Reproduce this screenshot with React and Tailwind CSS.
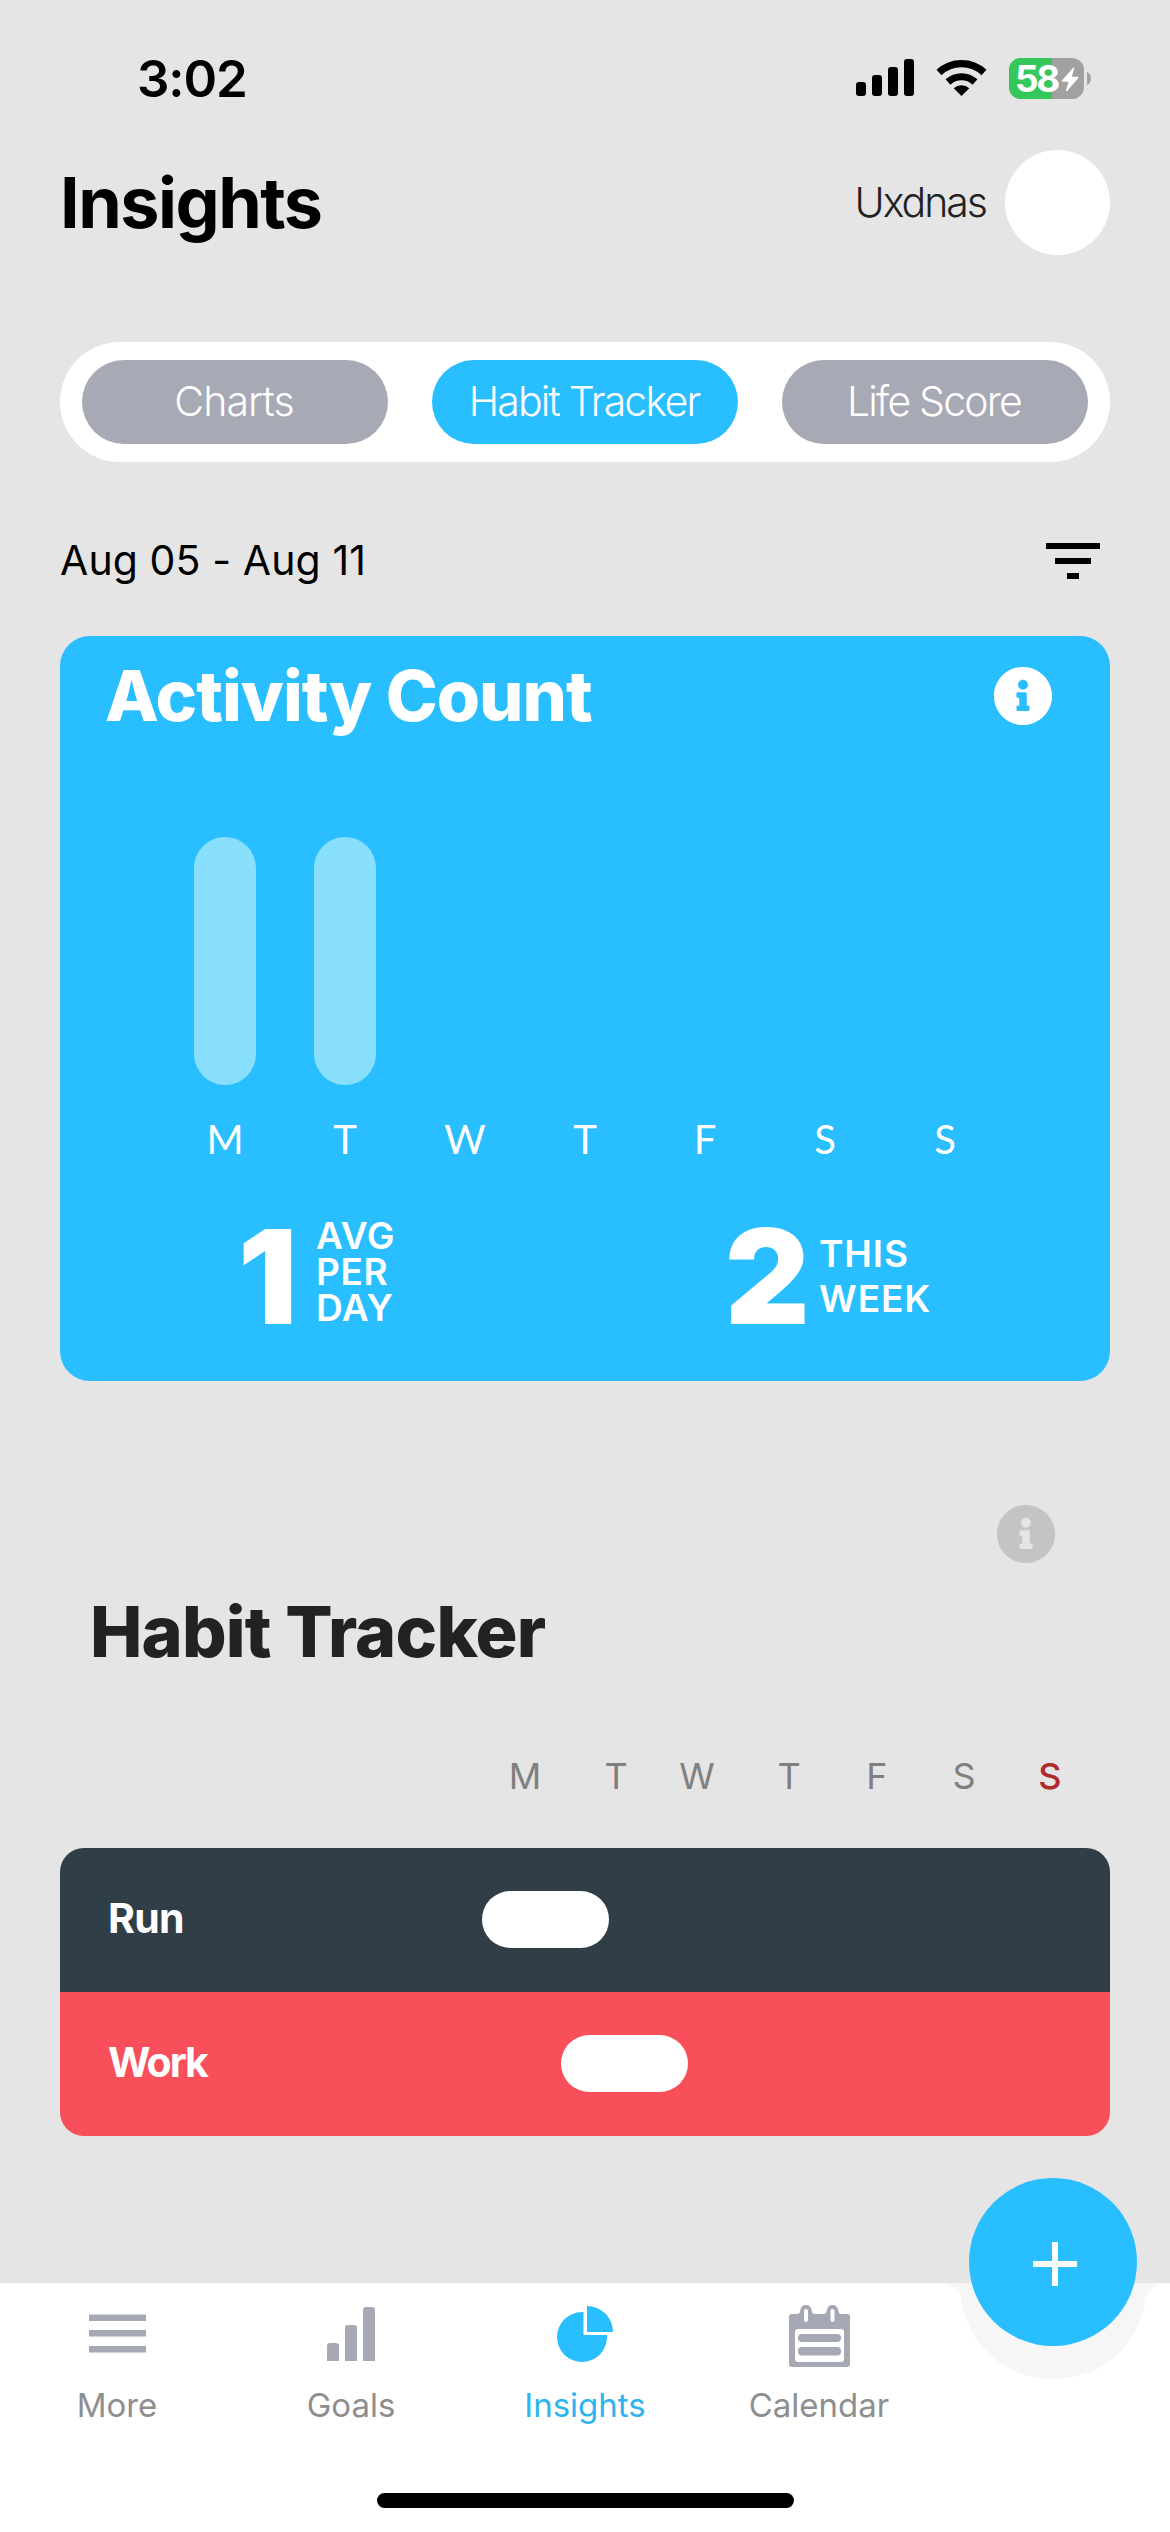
import React, { useState } from 'react';
import { FaInfoCircle } from 'react-icons/fa';

// ============================================================================
// DATA
// ============================================================================

const TABS = [
  { name: 'Charts', textClass: 'tracking-[-0.9px]' },
  { name: 'Habit Tracker', textClass: 'tracking-[-1.8px]' },
  { name: 'Life Score', textClass: 'tracking-[-1.8px]' },
];

const ACTIVITY = [
  { day: 'M', count: 1 },
  { day: 'T', count: 1 },
  { day: 'W', count: 0 },
  { day: 'T', count: 0 },
  { day: 'F', count: 0 },
  { day: 'S', count: 0 },
  { day: 'S', count: 0 },
];

const WEEK_DAYS = [
  { day: 'M', className: 'text-[#808080]' },
  { day: 'T', className: 'ml-[31px] text-[#808080]' },
  { day: 'W', className: 'ml-[21px] text-[#808080]' },
  { day: 'T', className: 'ml-[32px] text-[#808080]' },
  { day: 'F', className: 'ml-[28px] text-[#808080]' },
  { day: 'S', className: 'ml-[27px] text-[#808080]' },
  { day: 'S', className: 'ml-[26px] text-[#b02a2c] font-medium' },
];

const HABITS = [
  { name: 'Run', rowClass: 'bg-[#303e47]', pillClass: 'ml-[422px]', textClass: 'tracking-[-0.7px]' },
  { name: 'Work', rowClass: 'bg-[#f84f5a]', pillClass: 'ml-[501px]', textClass: 'tracking-[-2px]' },
];

// ============================================================================
// ICONS
// ============================================================================

const SignalIcon = () => (
  <svg width="58" height="38" viewBox="0 0 58 38" fill="black">
    <rect x="0" y="23" width="10" height="14" rx="3" />
    <rect x="16" y="16" width="10" height="21" rx="3" />
    <rect x="32" y="8" width="10" height="29" rx="3" />
    <rect x="48" y="0" width="10" height="37" rx="3" />
  </svg>
);

const WifiIcon = () => (
  <svg width="52" height="38" viewBox="0 0 52 38">
    <path d="M3 13.5 A33 33 0 0 1 48 13.5" fill="none" stroke="black" strokeWidth="7.4" />
    <path d="M12 23 A20 20 0 0 1 39 23" fill="none" stroke="black" strokeWidth="7.2" />
    <path d="M25.5 37 L17.7 29.2 A11.5 11.5 0 0 1 33.3 29.2 Z" fill="black" />
  </svg>
);

const BatteryIcon = () => (
  <div className="flex items-center">
    <div className="relative flex h-[41px] w-[75px] items-center rounded-[12px] bg-[#a1a1a1]">
      <div className="absolute inset-y-0 left-0 w-[43px] rounded-l-[12px] bg-[#34c759]" />
      <span className="relative ml-[6px] text-[37px] leading-[45px] font-bold tracking-[-2.4px] text-white">58</span>
      <svg className="absolute top-[8px] left-[52px]" width="18" height="27" viewBox="0 0 20 27" fill="white">
        <path d="M13.5 0.4 C14.4 -0.2 15 0.4 14.7 1.4 L12 10.4 H18.2 C19.4 10.4 19.6 11.4 19 12.2 L7 26.2 C6.2 27.1 5.2 26.6 5.5 25.5 L8.4 16 H2 C0.8 16 0.6 15 1.3 14.2 Z" />
      </svg>
    </div>
    <svg className="ml-[3px]" width="4" height="13" viewBox="0 0 4 13" fill="#a1a1a1">
      <path d="M0 0 C2.6 1.2 4 3.6 4 6.5 C4 9.4 2.6 11.8 0 13 Z" />
    </svg>
  </div>
);

const FilterIcon = () => (
  <svg width="54" height="36" viewBox="0 0 54 36" fill="black">
    <rect x="0" y="0" width="54" height="6" />
    <rect x="9" y="15" width="36" height="6" />
    <rect x="21" y="30" width="12" height="6" />
  </svg>
);

const MoreIcon = () => (
  <svg width="57" height="62" viewBox="0 0 57 62" fill="#a7a8b5">
    <rect x="0" y="9.5" width="57" height="6.5" />
    <rect x="0" y="25" width="57" height="6.5" />
    <rect x="0" y="41" width="57" height="6.5" />
  </svg>
);

const GoalsIcon = () => (
  <svg width="48" height="62" viewBox="0 0 48 62" fill="#a7a8b5">
    <path d="M0 56 V41 Q0 38 3 38 H9 Q12 38 12 41 V56 Z" />
    <path d="M18 56 V23 Q18 20 21 20 H27 Q30 20 30 23 V56 Z" />
    <path d="M36 56 V5 Q36 2 39 2 H45 Q48 2 48 5 V56 Z" />
  </svg>
);

const InsightsIcon = () => (
  <svg width="56" height="62" viewBox="0 0 56 62" fill="#28beff">
    <path d="M26.5 7 V30 H50 V32 A25 25 0 1 1 25 7 Z" />
    <path d="M30 1 A26 26 0 0 1 56 27 H30 Z" />
  </svg>
);

const CalendarIcon = () => (
  <svg width="61" height="62" viewBox="0 0 61 62" fill="#a7a8b5">
    <path d="M3 9 H8 C10 9 11 8 11.2 5.5 C11.6 2 13.8 0 17 0 C20.2 0 22.4 2 22.8 5.5 C23 8 24 9 26 9 H34.5 C36.5 9 37.5 8 37.7 5.5 C38.1 2 40.3 0 43.5 0 C46.7 0 48.9 2 49.3 5.5 C49.5 8 50.5 9 52.5 9 H58 Q61 9 61 12 V59 Q61 62 58 62 H3 Q0 62 0 59 V12 Q0 9 3 9 Z" />
    <g fill="white">
      <rect x="15" y="4" width="4" height="13" rx="2" />
      <rect x="41.5" y="4" width="4" height="13" rx="2" />
      <rect x="6" y="24" width="49" height="33" rx="3" />
    </g>
    <rect x="9" y="29" width="43" height="8" rx="4" />
    <rect x="9" y="42" width="43" height="8.5" rx="4" />
  </svg>
);

const NAV_ITEMS = [
  { name: 'More', icon: MoreIcon },
  { name: 'Goals', icon: GoalsIcon },
  { name: 'Insights', icon: InsightsIcon },
  { name: 'Calendar', icon: CalendarIcon },
];

// ============================================================================
// SECTIONS
// ============================================================================

const StatusBar = () => (
  <div className="flex h-[144px] items-center justify-between pt-[12px] pr-[79px] pl-[137px]">
    <span className="text-[51px] leading-none font-semibold tracking-[-1.1px] text-black">3:02</span>
    <div className="flex items-center">
      <SignalIcon />
      <div className="ml-[22px]">
        <WifiIcon />
      </div>
      <div className="ml-[21px]">
        <BatteryIcon />
      </div>
    </div>
  </div>
);

const ActivityCard = () => (
  <section className="mx-[60px] h-[745px] rounded-[30px] bg-[#28beff] text-white">
    <div className="flex h-[120px] items-center justify-between pr-[57px] pl-[45px]">
      <h2 className="text-[70px] leading-none font-extrabold tracking-[-1px]">Activity Count</h2>
      <FaInfoCircle size={60} />
    </div>

    {/* BARS */}
    <div className="mt-[81px] ml-[105px] grid w-[840px] grid-cols-7">
      {ACTIVITY.map((item, i) => (
        <div key={i} className="flex h-[248px] items-end justify-center">
          {item.count > 0 && <div className="h-full w-[62px] rounded-full bg-[#87dffb]" />}
        </div>
      ))}
    </div>
    <div className="ml-[105px] grid h-[109px] w-[840px] grid-cols-7 items-center font-['Lato',sans-serif]">
      {ACTIVITY.map((item, i) => (
        <span key={i} className="pb-px text-center text-[40px] leading-none">{item.day}</span>
      ))}
    </div>

    {/* TOTALS */}
    <div className="grid h-[165px] grid-cols-2">
      <div className="flex items-center pl-[178px]">
        <span className="w-[78px] text-[131px] leading-none font-black">1</span>
        <div className="flex flex-col pb-[10px] text-[37px] leading-[36px] font-semibold tracking-[0.6px]">
          <span>AVG</span>
          <span>PER</span>
          <span>DAY</span>
        </div>
      </div>
      <div className="flex items-center pl-[140px]">
        <span className="w-[94px] text-[131px] leading-none font-black">2</span>
        <div className="flex flex-col pb-[2px] text-[37px] leading-[45px] font-semibold tracking-[0.9px]">
          <span>THIS</span>
          <span>WEEK</span>
        </div>
      </div>
    </div>
  </section>
);

const HabitTracker = () => (
  <section className="mx-[60px] mt-[123px]">
    <div className="flex h-[60px] items-center justify-end pr-[54px]">
      <FaInfoCircle size={60} className="text-[#c4c4c4]" />
    </div>
    <h2 className="pl-[30px] text-[70px] leading-[135px] font-extrabold tracking-[-0.8px] text-[#222222]">
      Habit Tracker
    </h2>
    <div className="flex h-[149px] items-center pt-[5px] pl-[435px] text-[36px] leading-none">
      {WEEK_DAYS.map((item, i) => (
        <div key={i} className={`w-[60px] text-center ${item.className}`}>{item.day}</div>
      ))}
    </div>
    <div className="overflow-hidden rounded-[24px]">
      {HABITS.map((habit) => (
        <div key={habit.name} className={`grid h-[144px] items-center ${habit.rowClass}`}>
          <span className={`col-start-1 row-start-1 pb-[4px] pl-[48px] text-[41px] leading-none font-bold text-white ${habit.textClass}`}>
            {habit.name}
          </span>
          <div className={`col-start-1 row-start-1 mb-[2px] h-[57px] w-[127px] rounded-full bg-white ${habit.pillClass}`} />
        </div>
      ))}
    </div>
  </section>
);

const BottomNav = ({ active, onChange }) => (
  <nav className="relative mt-auto h-[249px] bg-white">
    <svg className="absolute top-0 right-0" width="240" height="98" viewBox="930 0 240 98" fill="#f6f6f6">
      <path d="M933 0 C950 1 957 4 961 14 C967 62 1005 96 1053.500 96 C1102 96 1140 62 1146 14 C1150 4 1158 1 1170 0 Z" />
    </svg>
    <button className="absolute top-[-105px] right-[33px] flex h-[168px] w-[168px] items-center justify-center rounded-full bg-[#28beff]">
      <svg className="mt-[3px] ml-[3px]" width="44" height="44" viewBox="0 0 44 44" fill="white">
        <rect x="0" y="19" width="44" height="6" />
        <rect x="19" y="0" width="6" height="44" />
      </svg>
    </button>
    <div className="grid grid-cols-5 pt-[22px]">
      {NAV_ITEMS.map(({ name, icon: Icon }) => (
        <button key={name} onClick={() => onChange(name)} className="flex flex-col items-center">
          <Icon />
          <span className={`text-[33px] leading-[77px] ${name === active ? 'text-[#2cb5f0]' : 'text-[#8e8e8f]'}`}>
            {name}
          </span>
        </button>
      ))}
    </div>
    <div className="mx-auto mt-[49px] h-[15px] w-[417px] rounded-full bg-black" />
  </nav>
);

// ============================================================================
// APP
// ============================================================================

const App = () => {
  const [tab, setTab] = useState('Habit Tracker');
  const [page, setPage] = useState('Insights');

  return (
    <div className="flex h-[2532px] w-[1170px] flex-col overflow-hidden bg-[#e5e5e5] font-['Inter',sans-serif]">
      <StatusBar />

      {/* HEADER */}
      <header className="flex h-[117px] items-center justify-between px-[60px]">
        <h1 className="text-[70px] leading-none font-bold tracking-[-1.5px] text-black">Insights</h1>
        <div className="flex items-center">
          <span className="text-[41px] leading-none font-light tracking-[-2px] text-[#222222]">Uxdnas</span>
          <div className="ml-[19px] h-[105px] w-[105px] rounded-full bg-white" />
        </div>
      </header>

      {/* TABS */}
      <div className="mx-[60px] mt-[81px] flex h-[120px] items-center justify-between rounded-full bg-white px-[22px]">
        {TABS.map(({ name, textClass }) => (
          <button
            key={name}
            onClick={() => setTab(name)}
            className={`h-[84px] w-[306px] rounded-full pr-[2px] pb-[2px] text-[41px] leading-none font-[350] text-white ${textClass} ${
              name === tab ? 'bg-[#28beff]' : 'bg-[#a7a9b4]'
            }`}
          >
            {name}
          </button>
        ))}
      </div>

      {/* DATE RANGE */}
      <div className="flex h-[174px] items-center justify-between pt-[23px] pr-[70px] pl-[60px]">
        <span className="text-[41px] leading-none tracking-[0.1px] text-black">Aug 05 - Aug 11</span>
        <FilterIcon />
      </div>

      <ActivityCard />
      <HabitTracker />
      <BottomNav active={page} onChange={setPage} />
    </div>
  );
};

export default App;
